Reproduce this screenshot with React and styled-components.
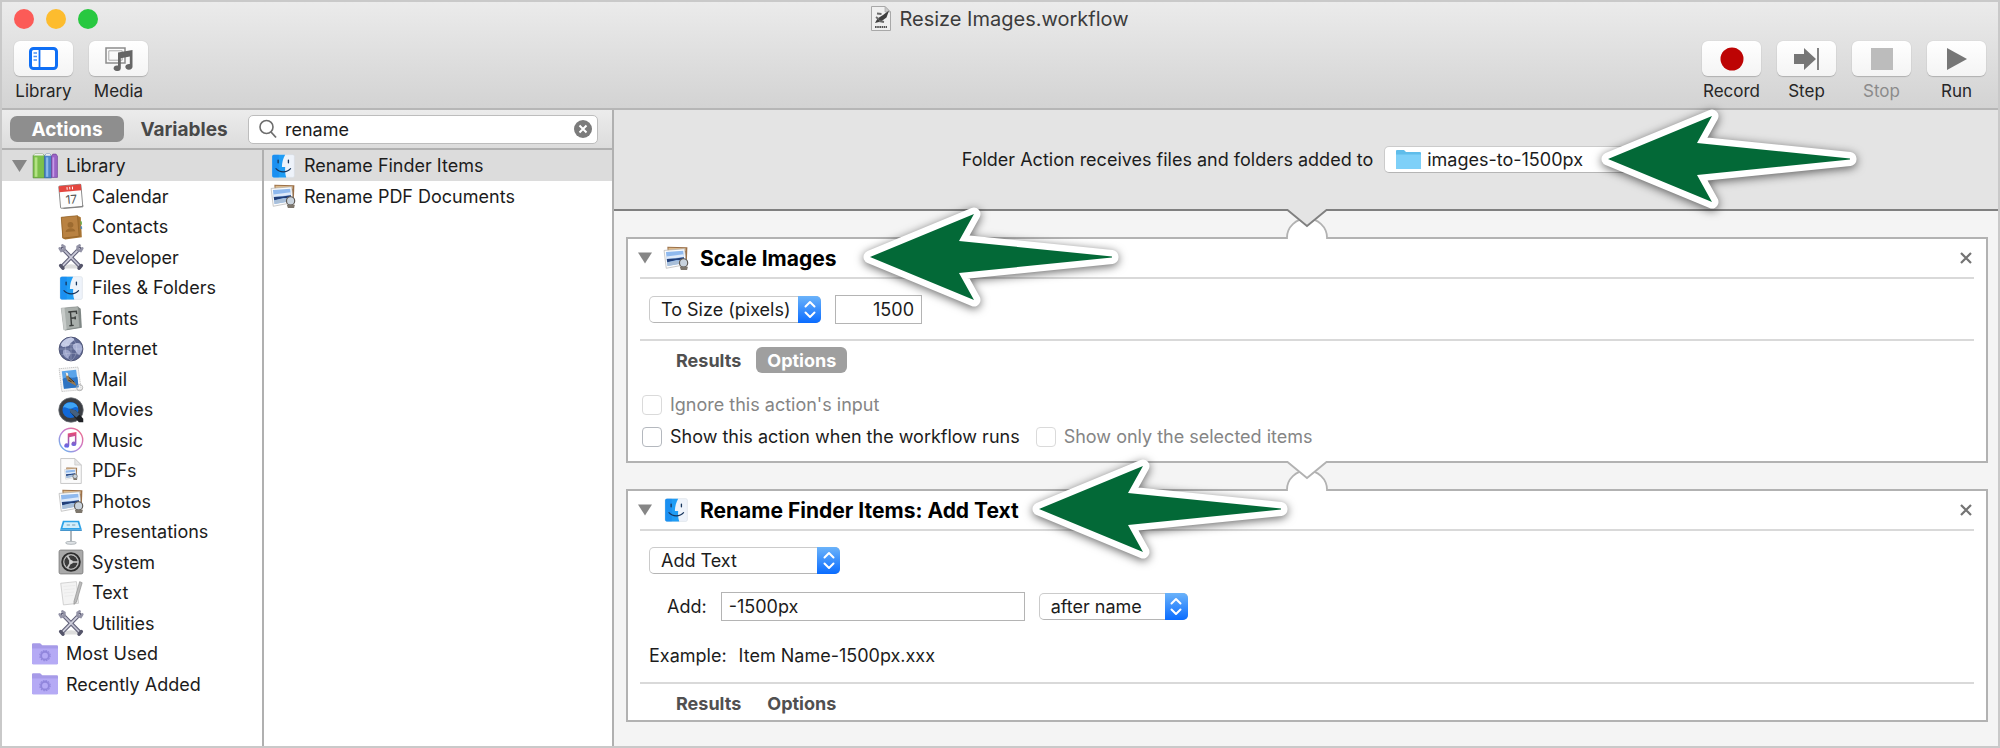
import React from "react";
import styled, { createGlobalStyle } from "styled-components";

const GlobalStyle = createGlobalStyle`
  *, *::before, *::after { box-sizing: border-box; }
  body { margin: 0; background: #f4f4f4; }
  body, button, input, select {
    font-family: Inter, "Liberation Sans", sans-serif;
    font-size: 18px;
    color: #1c1c1c;
  }
  ul { list-style: none; margin: 0; padding: 0; }
  button { padding: 0; border: 0; background: none; cursor: default; }
  svg { display: block; flex: none; }
`;

const Window = styled.div`
  display: flex;
  flex-direction: column;
  min-height: 100vh;
  border: 2px solid #c9c9c9;
  background: #f4f4f4;
`;

/* ---------- toolbar ---------- */

const Toolbar = styled.header`
  background: linear-gradient(#ebebeb, #d3d3d3);
  border-bottom: 2px solid #b6b6b6;
  padding: 0 12px 6px;
`;

const TitleRow = styled.div`
  display: grid;
  grid-template-columns: 1fr auto 1fr;
  align-items: center;
  height: 33px;
`;

const Lights = styled.div`
  display: flex;
  gap: 12px;
`;

const Light = styled.button`
  width: 20px;
  height: 20px;
  border-radius: 50%;
  background: ${(p) => p.$color};
`;

const Title = styled.h1`
  display: flex;
  align-items: center;
  gap: 8px;
  margin: 0;
  font-size: 20px;
  font-weight: 400;
  line-height: 24px;
  color: #3c3c3c;
`;

const ToolRow = styled.div`
  display: flex;
  justify-content: space-between;
  padding-top: 6px;
`;

const ToolGroup = styled.div`
  display: flex;
  gap: 16px;
`;

const ToolButton = styled.button`
  display: flex;
  flex-direction: column;
  align-items: center;
  gap: 4px;
  width: 59px;
  font-size: 17px;
  line-height: 22px;
  color: ${(p) => (p.disabled ? "#8b8b8b" : "#262626")};
`;

const ToolFace = styled.span`
  display: flex;
  align-items: center;
  justify-content: center;
  width: 100%;
  height: 35px;
  border-radius: 6px;
  background: linear-gradient(#ffffff, #f4f4f4);
  box-shadow: 0 0 1px #b4b4b4, 0 1px 1px #b0b0b0;
`;

/* ---------- sidebar ---------- */

const Body = styled.div`
  display: flex;
  flex: 1;
`;

const Sidebar = styled.aside`
  display: flex;
  flex-direction: column;
  flex: none;
  width: 612px;
  border-right: 2px solid #b0b0b0;
  background: #fff;
`;

const FilterBar = styled.div`
  display: flex;
  align-items: center;
  height: 40px;
  padding: 0 14px 0 8px;
  border-bottom: 2px solid #b0b0b0;
  background: linear-gradient(#ececec, #dcdcdc);
`;

const FilterTab = styled.button`
  flex: none;
  width: ${(p) => p.$width};
  height: 26px;
  border-radius: 7px;
  font-size: 19px;
  font-weight: 700;
  color: ${(p) => (p.$active ? "#fff" : "#484848")};
  background: ${(p) => (p.$active ? "#8e8e8e" : "transparent")};
`;

const SearchField = styled.label`
  display: flex;
  align-items: center;
  gap: 8px;
  flex: 1;
  min-width: 0;
  height: 29px;
  margin-left: 4px;
  padding: 0 5px 0 10px;
  border: 1px solid #bdbdbd;
  border-radius: 5px;
  background: #fff;
`;

const SearchInput = styled.input`
  flex: 1;
  min-width: 0;
  padding: 0;
  border: 0;
  outline: 0;
  background: transparent;
`;

const Lists = styled.div`
  display: flex;
  flex: 1;
`;

const LibraryList = styled.ul`
  width: 262px;
  border-right: 2px solid #b0b0b0;
`;

const ResultList = styled.ul`
  flex: 1;
`;

const ListRow = styled.li`
  display: flex;
  align-items: center;
  gap: 8px;
  height: 30px;
  padding-left: ${(p) => p.$indent};
  background: ${(p) => (p.$selected ? "#dcdcdc" : "transparent")};
  white-space: nowrap;
  &:nth-child(odd) { height: 31px; }
`;

const Disclosure = styled.button`
  width: 16px;
  margin-right: -4px;
`;

/* ---------- workflow ---------- */

const Workflow = styled.main`
  flex: 1;
  min-width: 0;
`;

const Receives = styled.div`
  display: flex;
  align-items: center;
  justify-content: center;
  gap: 11px;
  height: 101px;
  border-bottom: 2px solid #808080;
  background: #e4e4e4;
`;

const Steps = styled.div`
  padding: 0 10px 24px 12px;
`;

const Link = styled.div`
  position: relative;
  z-index: 1;
  display: flex;
  justify-content: center;
  margin: -2px 0;
`;

const Card = styled.section`
  border: 2px solid #b2b2b2;
  background: #fff;
  padding: 0 12px ${(p) => p.$bottom};
`;

const CardHeader = styled.div`
  display: flex;
  align-items: center;
  height: 40px;
  border-bottom: 2px solid #d9d9d9;
`;

const CardTitle = styled.h2`
  position: relative;
  margin: 0 0 0 11px;
  padding-top: 2px;
  font-size: 21px;
  font-weight: 700;
  line-height: 24px;
  color: #000;
  white-space: nowrap;
`;

const CardDisclosure = styled.button`
  width: 14px;
  margin: 0 11px 0 -2px;
`;

const CloseButton = styled.button`
  margin-left: auto;
  padding: 2px;
`;

const Settings = styled.div`
  display: flex;
  flex-direction: column;
  padding: 16px 9px 15px;
  border-bottom: 2px solid #d9d9d9;
`;

const FieldRow = styled.div`
  display: flex;
  align-items: center;
  gap: 14px;
  padding-left: ${(p) => p.$indent || "0"};
  margin-top: ${(p) => p.$above || "0"};
`;

const Example = styled.p`
  display: flex;
  gap: 12px;
  margin: 24px 0 0;
  line-height: 22px;
`;

const TextField = styled.input`
  width: ${(p) => p.$width};
  height: 29px;
  padding: 0 7px;
  border: 1px solid #b4b4b4;
  border-radius: 0;
  background: #fff;
  text-align: ${(p) => p.$align || "left"};
  outline: 0;
`;

const SelectBox = styled.span`
  position: relative;
  display: inline-flex;
  width: ${(p) => p.$width};
`;

const Select = styled.select`
  width: 100%;
  height: 27px;
  padding: 0 0 0 ${(p) => p.$inset || "11px"};
  appearance: none;
  border: 1px solid #cbcbcb;
  border-bottom-color: #b5b5b5;
  border-radius: 5px;
  background: #fff;
  outline: 0;
`;

const Stepper = styled.span`
  position: absolute;
  top: 0;
  right: 0;
  display: flex;
  align-items: center;
  justify-content: center;
  width: 23px;
  height: 27px;
  border-radius: 0 5px 5px 0;
  background: linear-gradient(#6bb3fa, #0a6cff);
  pointer-events: none;
`;

const SelectIcon = styled.span`
  position: absolute;
  top: 3px;
  left: 12px;
  pointer-events: none;
`;

const Tabs = styled.div`
  display: flex;
  gap: 4px;
  padding: 6px 0 0 25px;
`;

const Tab = styled.button`
  height: 26px;
  padding: 0 11px;
  border-radius: 6px;
  font-weight: 700;
  color: ${(p) => (p.$active ? "#fff" : "#505050")};
  background: ${(p) => (p.$active ? "#9f9f9f" : "transparent")};
`;

const Options = styled.div`
  display: grid;
  gap: 12px;
  padding: 22px 2px 0;
`;

const OptionRow = styled.div`
  display: flex;
  gap: 16px;
`;

const Option = styled.label`
  display: flex;
  align-items: center;
  gap: 8px;
  line-height: 20px;
  color: ${(p) => (p.$dim ? "#858585" : "#1c1c1c")};
`;

const Tick = styled.input`
  appearance: none;
  width: 20px;
  height: 20px;
  margin: 0;
  border: 1px solid #b4b8be;
  border-radius: 4px;
  background: #fff;
  &:disabled { border-color: #dadada; }
`;

const Pointer = styled.svg`
  position: absolute;
  z-index: 2;
  top: 50%;
  left: 100%;
  margin: -71px 0 0 ${(p) => p.$offset};
  pointer-events: none;
  overflow: visible;
  filter: drop-shadow(0 2px 5px rgba(0, 0, 0, 0.6));
`;

/* ---------- drawings ---------- */

const Svg = ({ size = 26, children }) => (
  <svg width={size} height={size} viewBox="0 0 24 24" aria-hidden="true">
    {children}
  </svg>
);

const Triangle = ({ size = 15 }) => (
  <svg width={size} height="12" viewBox="0 0 15 12" aria-hidden="true">
    <path d="M0 0H15L7.5 12Z" fill="#868686" />
  </svg>
);

const Books = () => (
  <Svg>
    <path d="M1 2.500L2.500 1H10l1.500 1.500V23H1Z" fill="#7cc04b" stroke="#5a8a3c" strokeWidth=".6" />
    <path d="M2.500 4V22h2.500V4Z" fill="#b4e284" />
    <path d="M11.500 3L13 1h3.500L18 3V23h-6.500Z" fill="#4d86c9" stroke="#34649c" strokeWidth=".6" />
    <path d="M13 4h2v18h-2Z" fill="#8bb9ea" />
    <path d="M18 3l1.200-2h3L23.500 3V22.500H18Z" fill="#9a63c6" stroke="#6d4394" strokeWidth=".6" />
    <path d="M19 4h1.500v18H19Z" fill="#c79be6" />
    <path d="M2.500 1H10l1 1.300H1.500ZM13 1h3.500l1 1.500H12Z" fill="#eee" />
  </Svg>
);

const Calendar = () => (
  <Svg>
    <g transform="rotate(-5 12 12)">
      <rect x="1.500" y="2" width="20.500" height="20.500" rx="1" fill="#fdfdfd" stroke="#8b8b8b" strokeWidth=".9" />
      <path d="M1.500 2H22v5.500H1.500Z" fill="#e4463f" />
      <path d="M9 3.500v2.500M11.500 3.500v2.500M14 3.500v2.500" stroke="#fff" strokeWidth=".9" />
      <text x="12" y="19" textAnchor="middle" fontSize="11" fill="#555">17</text>
    </g>
    <path d="M23 20.500L23 22l-18 1.500" fill="none" stroke="#777" strokeWidth=".8" />
  </Svg>
);

const Contacts = () => (
  <Svg>
    <path d="M3 3L18 1.500 21 3l1 18.500L6.500 23.500 4 22Z" fill="#a87433" />
    <path d="M3 3L18 1.500 19.500 20.500 4.500 22.300Z" fill="#b98242" stroke="#8d5c22" strokeWidth=".6" />
    <circle cx="11.500" cy="10" r="2.700" fill="#9d6b30" />
    <path d="M7 16.500c.5-4 8.500-4.500 9-.5Z" fill="#9d6b30" />
    <path d="M20.600 6.500l1.400.5.1 3-1.400-.3Z" fill="#6cae4d" />
    <path d="M20.800 11l1.400.5.1 2.500-1.400-.3Z" fill="#4d8fc6" />
  </Svg>
);

const Tools = () => (
  <Svg>
    <path d="M5 20.500c3-2.500 11-2.500 14 0v2H5Z" fill="#dedede" />
    <g fill="none" strokeLinecap="round">
      <path d="M4 4L20 20.500" stroke="#62627a" strokeWidth="3.600" />
      <path d="M20 4L4 20.500" stroke="#62627a" strokeWidth="3.600" />
      <path d="M4.500 4.500L19.500 20" stroke="#c0c0d0" strokeWidth="1.600" />
      <path d="M19.500 4.500L4.500 20" stroke="#cfcfdc" strokeWidth="1.600" />
      <path d="M1.500 4L3 6.500 6 5.500 6 2.500 4 1.200M22.500 4L21 6.500 18 5.500 18 2.500 20 1.200" stroke="#9393a6" strokeWidth="2.200" />
      <path d="M2.500 20L4.500 22.300M21.500 20L19.500 22.300" stroke="#55556a" strokeWidth="3.200" />
    </g>
  </Svg>
);

const Finder = () => (
  <Svg>
    <rect x="2" y="1.500" width="20.500" height="21" rx="1.500" fill="#eef3fa" stroke="#d4dbe4" strokeWidth=".5" />
    <path d="M3.500 1.500H14C12 5 11 9 11 13h3c-.2 4 0 6.500 1 9.500H3.500A1.500 1.500 0 0 1 2 21V3a1.500 1.500 0 0 1 1.500-1.500Z" fill="#1f9df5" />
    <path d="M2 3a1.500 1.500 0 0 1 1.500-1.500H8V22.500H3.500A1.500 1.500 0 0 1 2 21Z" fill="#1479ea" opacity=".35" />
    <path d="M7.500 6.500v2.500M17 6.500v2.500" stroke="#17355c" strokeWidth="1.200" strokeLinecap="round" />
    <path d="M5.500 14.500c3.500 4 10 4 13.500 0" fill="none" stroke="#17355c" strokeWidth="1.100" strokeLinecap="round" />
  </Svg>
);

const FontBook = () => (
  <Svg>
    <path d="M4 3L18.500 1.500 21 3.500 22 21 6.500 23.500Z" fill="#7f8785" />
    <path d="M3 3L18.500 1.500 20 20.500 5.500 23Z" fill="#a9afac" stroke="#868c89" strokeWidth=".5" />
    <path d="M3 3l3-.3L8 22.500l-2.500.5Z" fill="#c7cbc9" />
    <path d="M9.500 6.500l7.500-.7.200 2.500M11.500 6.500l1 12.500M10.500 19.200l4-.4M12 12.200l4-.4M15.800 10.500l.2 2.800" fill="none" stroke="#3b3f3e" strokeWidth="1.300" />
  </Svg>
);

const Globe = () => (
  <Svg>
    <circle cx="12" cy="12" r="11" fill="#5d6791" stroke="#474d6d" strokeWidth=".8" />
    <path d="M2.500 8.500C4 4 8 1.600 12 1.600c3 .2 4 2 1.500 3.400-3 1.500-2 3.500-4.500 4.500-3 .5-4 1.500-6.500-1Z" fill="#c2c9e4" />
    <path d="M14 8c3-2.500 6-2 8 1 .8 3 0 6-2 8-2 .5-2.500-2-4-3.500S12.500 9.500 14 8Z" fill="#a9b1d4" />
    <path d="M5 13c3-1 6 0 6.500 2.500S9.500 19 9.500 21C6 20 3.500 17 5 13Z" fill="#9ba3c9" />
    <path d="M12 1V23M1 12H23M12 1C5 6 5 18 12 23M12 1c7 5 7 17 0 22M3 6.500c5 2 13 2 18 0M3 17.500c5-2 13-2 18 0" fill="none" stroke="#dfe3f3" strokeWidth=".4" opacity=".6" />
  </Svg>
);

const Mail = () => (
  <Svg>
    <path d="M1 2.500L18.500 1 21.500 22 3.500 23.500Z" fill="#f5f5f5" stroke="#b5b5b5" strokeWidth=".7" strokeDasharray="1.200 .6" />
    <path d="M3.500 4.800L16.700 3.500l2.300 16-13.500 1.500Z" fill="#5aa4ea" />
    <path d="M4.300 12c4-3 8 0 13.600-2l1.100 9.500-13.500 1.500Z" fill="#2f74c2" />
    <path d="M7 6.500c2 .5 2.500 2.500 3.500 4l5 4.500 1.500 3.500-3.500-2-4.500-2.500-1.500-3.500Z" fill="#9a7a50" />
    <path d="M7 6l2 .5.500 2-1.500 1Z" fill="#f4f0e6" />
    <path d="M10 10.500l5 4.500M9.500 13l3 1.500" stroke="#3b2d20" strokeWidth=".9" />
    <circle cx="20" cy="20" r="2.800" fill="none" stroke="#b0b0b0" strokeWidth=".9" />
  </Svg>
);

const QuickTime = () => (
  <Svg>
    <circle cx="12" cy="12" r="11.300" fill="#3b3e44" />
    <circle cx="12" cy="12" r="11.300" fill="none" stroke="#6c7076" strokeWidth=".7" />
    <circle cx="11.500" cy="12" r="7.400" fill="#1168d8" />
    <path d="M4.500 10a7.400 7.400 0 0 1 14 0c-3-2-5 1-7.500 1s-4-2.500-6.500-1Z" fill="#3fa4f5" />
    <path d="M11 11l5.500 1.500L23.300 20v3.300h-4L11.500 14Z" fill="#1f2125" />
    <path d="M10.500 10.500l6 2L20 16l-3 3-5.500-5Z" fill="#46607e" />
  </Svg>
);

const Music = () => (
  <Svg>
    <defs>
      <linearGradient id="tuneRing" x1="1" y1="0" x2="0" y2="1">
        <stop offset="0" stopColor="#f4697c" />
        <stop offset=".5" stopColor="#c47cd6" />
        <stop offset="1" stopColor="#58bff0" />
      </linearGradient>
      <linearGradient id="tuneNote" x1="0" y1="0" x2="0" y2="1">
        <stop offset="0" stopColor="#f0486f" />
        <stop offset="1" stopColor="#5b6bee" />
      </linearGradient>
    </defs>
    <circle cx="12" cy="12" r="10.800" fill="#fff" stroke="url(#tuneRing)" strokeWidth="1.300" />
    <path d="M9 6l8-1.500V15.500a2.300 2 0 1 1-1.400-1.800V8.300L10.400 9.400V17A2.300 2 0 1 1 9 15.200Z" fill="url(#tuneNote)" />
  </Svg>
);

const Photo = () => (
  <>
    <path d="M4 1.500L22.500 2l-.5 14-17-1Z" fill="#9b7048" />
    <path d="M5 2.500L21 3l-.3 2.500L5 5Z" fill="#dcb98b" />
    <path d="M1 5L20 3.500 21.500 18 3 21.500Z" fill="#fbfbfb" stroke="#adadad" strokeWidth=".6" />
    <path d="M2.700 6.500L18.700 5.200 19.800 16.500 4.200 19.300Z" fill="#8fb9ee" />
    <path d="M3.200 10.500L19 8.500l.3 2.500L3.500 13Z" fill="#dfeaf9" />
    <path d="M3.500 13l8-.5 7.800-1.200.3 2.700-7-.2-8.700 2.200Z" fill="#223f78" />
    <path d="M3.900 16.200l8.500-2 7.200.3.200 2-15.600 2.800Z" fill="#a9bfd8" />
    <circle cx="19" cy="16.500" r="3.800" fill="#c9d3dd" stroke="#5f5a55" strokeWidth="1.100" />
    <path d="M15.500 20h7.500l-.8 3h-5.700Z" fill="#7d766c" />
  </>
);

const Photos = () => <Svg><Photo /></Svg>;

const Pdf = () => (
  <Svg>
    <path d="M2.500.500H15.500L21.500 6.500V23.500H2.500Z" fill="#fbfbfb" stroke="#c2c2c2" strokeWidth=".8" />
    <path d="M15.500.500V6.500H21.500Z" fill="#e6e6e6" stroke="#c2c2c2" strokeWidth=".6" />
    <g transform="translate(5.500 8) scale(.54)"><Photo /></g>
  </Svg>
);

const Keynote = () => (
  <Svg>
    <path d="M4.500 1.500h15l2.500 8.500H2Z" fill="#2ea3e8" />
    <path d="M5.800 3h12.400l1.700 5.200H4.100Z" fill="#d3eefb" />
    <path d="M8 5.500h3M13 5.500h3" stroke="#7b9cae" strokeWidth="1" />
    <path d="M2 10h20v.9H2Z" fill="#1a7cc0" />
    <path d="M12 11V21" stroke="#a4acb2" strokeWidth="1.600" />
    <ellipse cx="12" cy="22" rx="5" ry="1.400" fill="#dfe3e6" stroke="#959ca1" strokeWidth=".6" />
  </Svg>
);

const System = () => (
  <Svg>
    <rect x="1" y="1" width="22" height="22" rx="1.500" fill="#a9a9a9" stroke="#7c7c7c" strokeWidth=".8" />
    <circle cx="12" cy="12" r="9" fill="#2d2d2d" />
    <circle cx="12" cy="12" r="6.600" fill="none" stroke="#b5b5b5" strokeWidth="1.400" />
    <circle cx="12" cy="12" r="5.800" fill="#3b3b3b" />
    <path d="M12 12L18.500 12M12 12L8.700 6.500M12 12L8.700 17.500" stroke="#c9c9c9" strokeWidth="1.600" />
    <circle cx="12" cy="12" r="1.800" fill="#d2d2d2" />
  </Svg>
);

const TextDoc = () => (
  <Svg>
    <path d="M2.500 3L17 1.500 19 21.500 5 23Z" fill="#f3f3f3" stroke="#c6c6c6" strokeWidth=".7" />
    <path d="M5 6l11-1M5.300 9l10-.9M5.600 12l9.500-.9M6 15l8-.8" stroke="#e6e6e6" strokeWidth=".6" />
    <path d="M20 1.500l2.300 1L17 20.500l-2.300 2 .1-3Z" fill="#bcbcbc" stroke="#8d8d8d" strokeWidth=".6" />
  </Svg>
);

const SmartFolder = () => (
  <Svg>
    <path d="M0 4.500V3a1 1 0 0 1 1-1H7.500l2 2H23a1 1 0 0 1 1 1V20.500a1 1 0 0 1-1 1H1a1 1 0 0 1-1-1Z" fill="#a69ae8" />
    <path d="M0 7H24V20.500a1 1 0 0 1-1 1H1a1 1 0 0 1-1-1Z" fill="#b5aaf5" />
    <circle cx="12" cy="13.500" r="3.600" fill="none" stroke="#9186dc" strokeWidth="1.800" />
    <circle cx="12" cy="13.500" r="4.800" fill="none" stroke="#9186dc" strokeWidth="1" strokeDasharray="1.500 1" />
  </Svg>
);

const BlueFolder = () => (
  <svg width="25" height="21" viewBox="0 0 25 21" aria-hidden="true">
    <path d="M0 2a1 1 0 0 1 1-1H8l2 2H24a1 1 0 0 1 1 1V19a1 1 0 0 1-1 1H1a1 1 0 0 1-1-1Z" fill="#5fbdea" />
    <path d="M0 5.500H25V19a1 1 0 0 1-1 1H1a1 1 0 0 1-1-1Z" fill="#7ed0f8" />
  </svg>
);

const WorkflowDoc = () => (
  <svg width="20" height="25" viewBox="0 0 20 25" aria-hidden="true">
    <path d="M.500.500H14L19.500 6V24.500H.500Z" fill="#f0f0f0" stroke="#a8a8a8" />
    <path d="M14 .500V6H19.500Z" fill="#c9c9c9" stroke="#a8a8a8" strokeWidth=".7" />
    <path d="M4 17L6.500 12.500 12 9 18 4.500 15.500 11.500 10 15.500Z" fill="#3f3f3f" />
    <path d="M6 7.500l4.500.5M5 11l3 2.500M8 15l5 1" fill="none" stroke="#6a6a6a" strokeWidth="1.800" />
    <path d="M4 21H16" stroke="#555" strokeWidth="2" strokeDasharray="1.600 .6" />
  </svg>
);

const LibraryGlyph = () => (
  <svg width="29" height="23" viewBox="0 0 29 23" aria-hidden="true">
    <rect x="1.500" y="1.500" width="26" height="20" rx="3" fill="#fff" stroke="#0f6ff5" strokeWidth="3" />
    <path d="M10.500 2V21" stroke="#0f6ff5" strokeWidth="1.800" />
    <path d="M4.500 6h3.500M4.500 9.500h3.500M4.500 13h3.500" stroke="#4a92f7" strokeWidth="1.400" />
  </svg>
);

const MediaGlyph = () => (
  <svg width="28" height="24" viewBox="0 0 28 24" aria-hidden="true">
    <path d="M1 1H20V16H1Z" fill="none" stroke="#8c8c8c" strokeWidth="1.500" />
    <path d="M3.800 3.800H17.200V13.200H3.800Z" fill="none" stroke="#ababab" strokeWidth="1" />
    <path d="M13 5.500L27.500 3V19.500A3.600 2.900 0 1 1 24.800 17V9.500L15.800 11.200V21.200A3.600 2.800 0 1 1 13 18.500Z" fill="#666" />
  </svg>
);

const RecordGlyph = () => (
  <svg width="24" height="24" viewBox="0 0 24 24" aria-hidden="true"><circle cx="12" cy="12" r="11.500" fill="#bd0404" /></svg>
);

const StepGlyph = () => (
  <svg width="26" height="24" viewBox="0 0 26 24" aria-hidden="true">
    <path d="M0 7H10V1L22 12 10 23V17H0Z" fill="#767676" />
    <path d="M24 1V23" stroke="#767676" strokeWidth="1.800" />
  </svg>
);

const StopGlyph = () => (
  <svg width="24" height="24" viewBox="0 0 24 24" aria-hidden="true"><path d="M1 1H23V23H1Z" fill="#bcbcbc" /></svg>
);

const RunGlyph = () => (
  <svg width="20" height="24" viewBox="0 0 20 24" aria-hidden="true"><path d="M0 1L20 12 0 23Z" fill="#767676" /></svg>
);

const Chevrons = () => (
  <svg width="12" height="19" viewBox="0 0 12 19" aria-hidden="true">
    <path d="M1.500 6.500L6 2l4.500 4.500M1.500 12.500L6 17l4.500-4.500" fill="none" stroke="#fff" strokeWidth="2" strokeLinecap="round" strokeLinejoin="round" />
  </svg>
);

const Cross = () => (
  <svg width="12" height="12" viewBox="0 0 12 12" aria-hidden="true">
    <path d="M1 1L11 11M11 1L1 11" stroke="#747474" strokeWidth="2.200" />
  </svg>
);

const Joint = ({ fill, stroke }) => (
  <Link>
    <svg width="42" height="30" viewBox="0 0 42 30" aria-hidden="true">
      <path d="M1 30V28.500A20 19 0 0 1 41 28.500V30Z" fill="#fff" />
      <path d="M1 30V28.500A20 19 0 0 1 41 28.500V30" fill="none" stroke="#b2b2b2" strokeWidth="1.800" />
      <path d="M1 0L1.500 1 21 17 40.500 1 41 0Z" fill={fill} />
      <path d="M0 1H1.500L21 17 40.500 1H42" fill="none" stroke={stroke} strokeWidth="1.800" />
    </svg>
  </Link>
);

const Arrow = ({ offset }) => (
  <Pointer $offset={offset} width="254" height="140" viewBox="0 0 254 140" aria-hidden="true">
    <path
      d="M6 70L110 27 95 54 248 69.500V70.500L95 86 110 113Z"
      fill="#fff" stroke="#fff" strokeWidth="13" strokeLinejoin="round"
    />
    <path d="M6 70L110 27 95 54 248 69.500V70.500L95 86 110 113Z" fill="#036937" />
  </Pointer>
);

/* ---------- composed parts ---------- */

const Tool = ({ label, glyph, disabled }) => (
  <ToolButton type="button" disabled={disabled}>
    <ToolFace>{glyph}</ToolFace>
    {label}
  </ToolButton>
);

const Popup = ({ label, value, width }) => (
  <SelectBox $width={width}>
    <Select aria-label={label} defaultValue={value}>
      <option>{value}</option>
    </Select>
    <Stepper><Chevrons /></Stepper>
  </SelectBox>
);

const ActionCard = ({ icon, title, arrowOffset, bottom, settings, active, children }) => (
  <Card $bottom={bottom}>
    <CardHeader>
      <CardDisclosure type="button" aria-label={"Collapse " + title}><Triangle size={14} /></CardDisclosure>
      {icon}
      <CardTitle>
        {title}
        <Arrow offset={arrowOffset} />
      </CardTitle>
      <CloseButton type="button" aria-label={"Remove " + title}><Cross /></CloseButton>
    </CardHeader>
    <Settings>{settings}</Settings>
    <Tabs>
      {["Results", "Options"].map((name) => (
        <Tab key={name} type="button" $active={name === active}>{name}</Tab>
      ))}
    </Tabs>
    {children}
  </Card>
);

const categories = [
  ["Calendar", Calendar],
  ["Contacts", Contacts],
  ["Developer", Tools],
  ["Files & Folders", Finder],
  ["Fonts", FontBook],
  ["Internet", Globe],
  ["Mail", Mail],
  ["Movies", QuickTime],
  ["Music", Music],
  ["PDFs", Pdf],
  ["Photos", Photos],
  ["Presentations", Keynote],
  ["System", System],
  ["Text", TextDoc],
  ["Utilities", Tools],
];

export default function App() {
  return (
    <Window>
      <GlobalStyle />
      <Toolbar>
        <TitleRow>
          <Lights>
            <Light type="button" aria-label="Close" $color="#fc5b57" />
            <Light type="button" aria-label="Minimize" $color="#fdbc2e" />
            <Light type="button" aria-label="Zoom" $color="#28c840" />
          </Lights>
          <Title><WorkflowDoc />Resize Images.workflow</Title>
        </TitleRow>
        <ToolRow>
          <ToolGroup>
            <Tool label="Library" glyph={<LibraryGlyph />} />
            <Tool label="Media" glyph={<MediaGlyph />} />
          </ToolGroup>
          <ToolGroup>
            <Tool label="Record" glyph={<RecordGlyph />} />
            <Tool label="Step" glyph={<StepGlyph />} />
            <Tool label="Stop" glyph={<StopGlyph />} disabled />
            <Tool label="Run" glyph={<RunGlyph />} />
          </ToolGroup>
        </ToolRow>
      </Toolbar>

      <Body>
        <Sidebar>
          <FilterBar>
            <FilterTab type="button" $width="114px" $active>Actions</FilterTab>
            <FilterTab type="button" $width="120px">Variables</FilterTab>
            <SearchField>
              <svg width="18" height="20" viewBox="0 0 18 20" aria-hidden="true">
                <circle cx="7.500" cy="8" r="6.500" fill="none" stroke="#6d6d6d" strokeWidth="1.600" />
                <path d="M12 13L17 18.500" stroke="#6d6d6d" strokeWidth="1.800" />
              </svg>
              <SearchInput type="text" aria-label="Search actions" defaultValue="rename" />
              <button type="button" aria-label="Clear search">
                <svg width="18" height="18" viewBox="0 0 18 18">
                  <circle cx="9" cy="9" r="9" fill="#7b7b7b" />
                  <path d="M5.500 5.500l7 7M12.500 5.500l-7 7" stroke="#fff" strokeWidth="2" />
                </svg>
              </button>
            </SearchField>
          </FilterBar>
          <Lists>
            <LibraryList>
              <ListRow $indent="10px" $selected>
                <Disclosure type="button" aria-label="Collapse Library"><Triangle /></Disclosure>
                <Books />
                Library
              </ListRow>
              {categories.map(([name, Icon]) => (
                <ListRow key={name} $indent="56px"><Icon />{name}</ListRow>
              ))}
              <ListRow $indent="30px"><SmartFolder />Most Used</ListRow>
              <ListRow $indent="30px"><SmartFolder />Recently Added</ListRow>
            </LibraryList>
            <ResultList>
              <ListRow $indent="6px" $selected><Finder />Rename Finder Items</ListRow>
              <ListRow $indent="6px"><Photos />Rename PDF Documents</ListRow>
            </ResultList>
          </Lists>
        </Sidebar>

        <Workflow>
          <Receives>
            <label htmlFor="watched-folder">Folder Action receives files and folders added to</label>
            <SelectBox $width="266px">
              <Select id="watched-folder" $inset="42px" defaultValue="images-to-1500px">
                <option>images-to-1500px</option>
              </Select>
              <SelectIcon><BlueFolder /></SelectIcon>
              <Arrow offset="-48px" />
            </SelectBox>
          </Receives>
          <Steps>
            <Joint fill="#e4e4e4" stroke="#808080" />
            <ActionCard
              icon={<Photos />}
              title="Scale Images"
              arrowOffset="28px"
              bottom="14px"
              active="Options"
              settings={
                <FieldRow>
                  <Popup label="Scale mode" value="To Size (pixels)" width="172px" />
                  <TextField type="text" aria-label="Size in pixels" $width="87px" $align="right" defaultValue="1500" />
                </FieldRow>
              }
            >
              <Options>
                <OptionRow>
                  <Option $dim><Tick type="checkbox" disabled />Ignore this action's input</Option>
                </OptionRow>
                <OptionRow>
                  <Option><Tick type="checkbox" />Show this action when the workflow runs</Option>
                  <Option $dim><Tick type="checkbox" disabled />Show only the selected items</Option>
                </OptionRow>
              </Options>
            </ActionCard>
            <Joint fill="#ffffff" stroke="#b2b2b2" />
            <ActionCard
              icon={<Finder />}
              title="Rename Finder Items: Add Text"
              arrowOffset="14px"
              bottom="4px"
              settings={
                <>
                  <FieldRow><Popup label="Rename mode" value="Add Text" width="191px" /></FieldRow>
                  <FieldRow $indent="18px" $above="18px">
                    <label htmlFor="added-text">Add:</label>
                    <TextField id="added-text" type="text" $width="304px" defaultValue="-1500px" />
                    <Popup label="Position" value="after name" width="149px" />
                  </FieldRow>
                  <Example><span>Example:</span><span>Item Name-1500px.xxx</span></Example>
                </>
              }
            />
          </Steps>
        </Workflow>
      </Body>
    </Window>
  );
}
